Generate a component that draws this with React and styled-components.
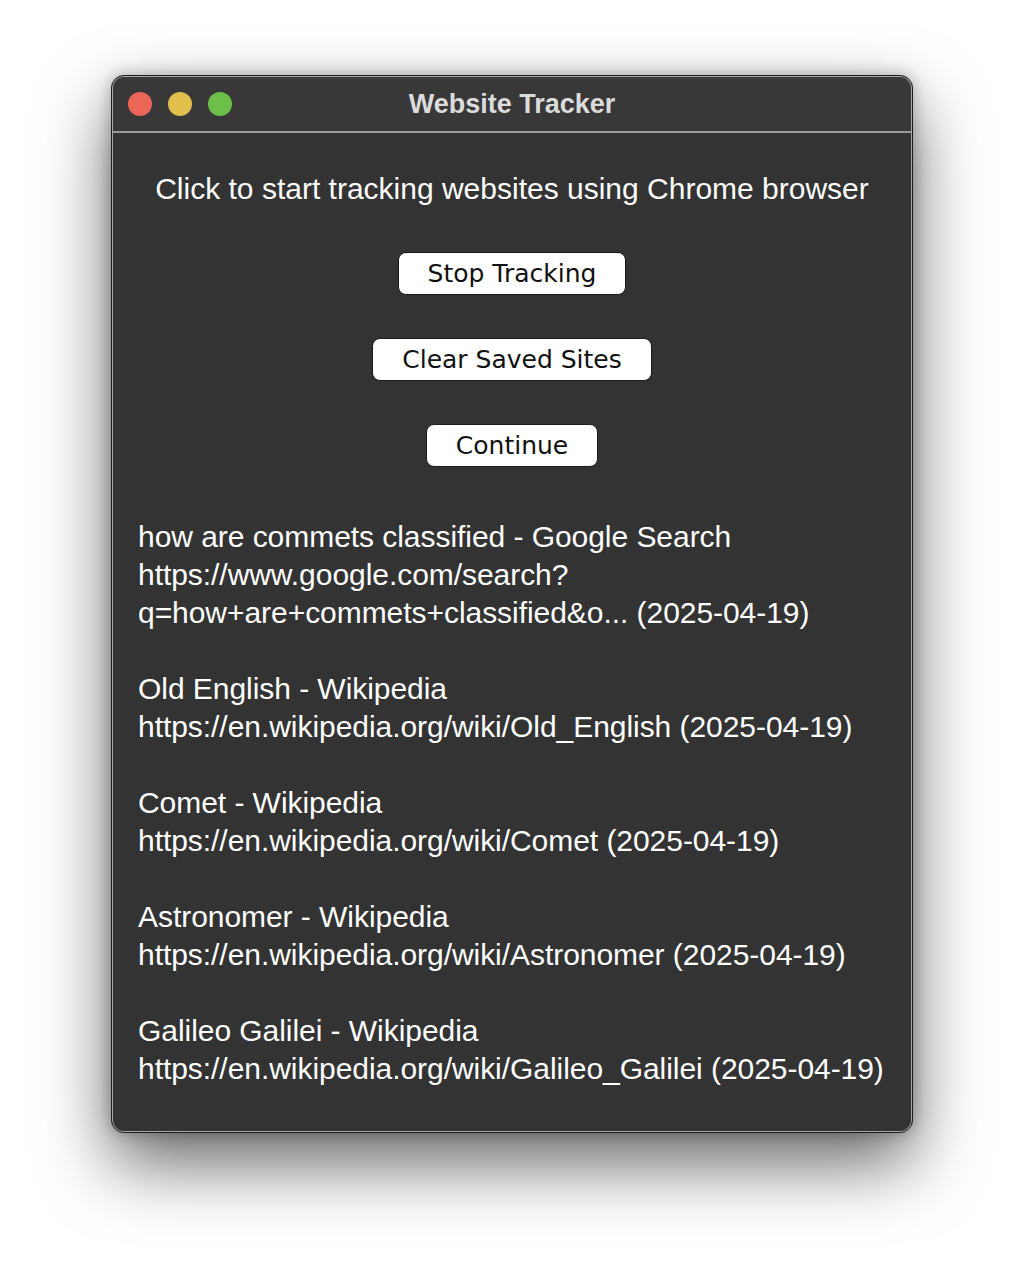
import React from 'react';
import styled, { createGlobalStyle } from 'styled-components';

const GlobalStyle = createGlobalStyle`
  body {
    margin: 0;
    background: #ffffff;
    font-family: "Liberation Sans", Arial, sans-serif;
  }
`;

const Page = styled.div`
  padding: 75px 0 148px;
  display: flex;
  justify-content: center;
`;

const Window = styled.div`
  width: 800px;
  border: 1px solid #1c1c1c;
  border-radius: 13px;
  background: #333333;
  box-shadow: 0 30px 70px rgba(0, 0, 0, 0.6), 0 0 16px rgba(0, 0, 0, 0.28);
  overflow: hidden;
`;

const TitleBar = styled.div`
  height: 57px;
  position: relative;
  display: flex;
  align-items: center;
  justify-content: center;
  box-sizing: border-box;
  background: #383838;
  border-top: 1px solid #a8a8a8;
  border-left: 1px solid #a8a8a8;
  border-right: 1px solid #a8a8a8;
  border-radius: 12px 12px 0 0;
  border-bottom: 2px solid #9c9c9c;
`;

const Lights = styled.div`
  position: absolute;
  left: 15px;
  top: 15px;
  display: flex;
  gap: 16px;
`;

const Light = styled.span`
  width: 24px;
  height: 24px;
  border-radius: 50%;
  background: ${(p) => p.color};
`;

const Title = styled.div`
  color: #dcdcdc;
  font-size: 27px;
  font-weight: bold;
  font-family: "Liberation Sans", Arial, sans-serif;
`;

const Content = styled.div`
  padding: 38px 25px 43px;
  border-left: 1px solid #a8a8a8;
  border-right: 1px solid #a8a8a8;
  border-bottom: 1px solid #a8a8a8;
  border-radius: 0 0 12px 12px;
  display: flex;
  flex-direction: column;
`;

const Heading = styled.div`
  color: #ffffff;
  font-size: 30px;
  line-height: 36px;
  text-align: center;
`;

const Buttons = styled.div`
  margin-top: 45px;
  display: flex;
  flex-direction: column;
  align-items: center;
  gap: 43px;
`;

const Button = styled.button`
  height: 43px;
  padding: 0 29px;
  background: #ffffff;
  color: #111111;
  border: 1px solid #1a1a1a;
  border-radius: 8px;
  font-family: "DejaVu Sans", sans-serif;
  font-size: 25px;
  cursor: pointer;
`;

const List = styled.div`
  margin-top: 51px;
  display: flex;
  flex-direction: column;
  gap: 38px;
`;

const Entry = styled.div`
  color: #ffffff;
  font-size: 30px;
  line-height: 38px;
  letter-spacing: -0.05px;
`;

const Line = styled.div`
  white-space: nowrap;
`;

const sites = [
  {
    lines: [
      'how are commets classified - Google Search',
      'https://www.google.com/search?',
      'q=how+are+commets+classified&o... (2025-04-19)',
    ],
  },
  { lines: ['Old English - Wikipedia', 'https://en.wikipedia.org/wiki/Old_English (2025-04-19)'] },
  { lines: ['Comet - Wikipedia', 'https://en.wikipedia.org/wiki/Comet (2025-04-19)'] },
  { lines: ['Astronomer - Wikipedia', 'https://en.wikipedia.org/wiki/Astronomer (2025-04-19)'] },
  { lines: ['Galileo Galilei - Wikipedia', 'https://en.wikipedia.org/wiki/Galileo_Galilei (2025-04-19)'] },
];

export default function App() {
  return (
    <>
      <GlobalStyle />
      <Page>
        <Window>
          <TitleBar>
            <Lights>
              <Light color="#ec6559" />
              <Light color="#e0c04c" />
              <Light color="#6cc04a" />
            </Lights>
            <Title>Website Tracker</Title>
          </TitleBar>
          <Content>
            <Heading>Click to start tracking websites using Chrome browser</Heading>
            <Buttons>
              <Button>Stop Tracking</Button>
              <Button>Clear Saved Sites</Button>
              <Button>Continue</Button>
            </Buttons>
            <List>
              {sites.map((s, i) => (
                <Entry key={i}>
                  {s.lines.map((l, j) => (
                    <Line key={j}>{l}</Line>
                  ))}
                </Entry>
              ))}
            </List>
          </Content>
        </Window>
      </Page>
    </>
  );
}
